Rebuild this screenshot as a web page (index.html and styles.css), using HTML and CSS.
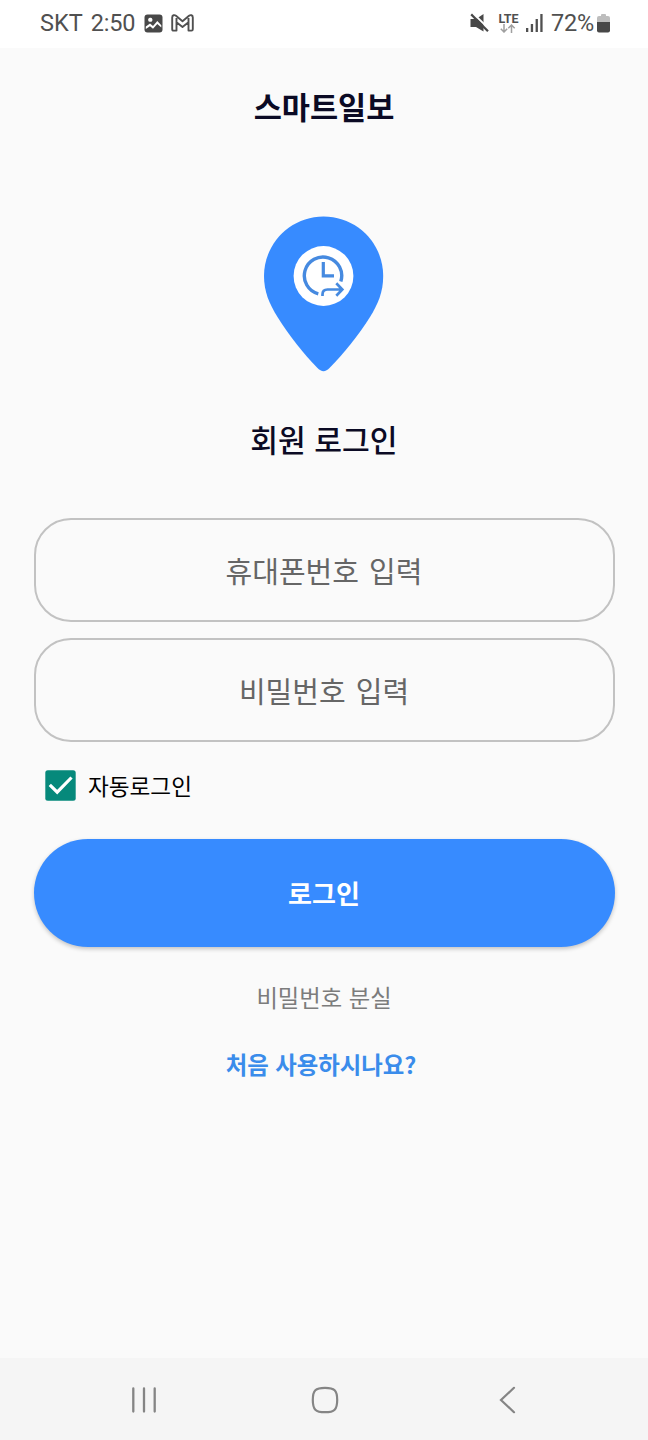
FILE: index.html
```html
<!DOCTYPE html>
<html lang="ko">
<head>
<meta charset="utf-8">
<title>스마트일보</title>
<link rel="stylesheet" href="styles.css">
</head>
<body>
<div class="phone">
  <header class="status">
    <div class="status-left">
      <span class="carrier">SKT</span>
      <span class="time">2:50</span>
      <svg class="photo-icon" width="19" height="19" viewBox="0 0 19 19"><rect x="0.500" y="0.500" width="18" height="18" rx="3" fill="#484848"/><path d="M1.800 12.500 6 9.500l3 2.500 4.300-5 4 4.200v2.300l-4-3.500L9 14.800l-3-2.500-4.200 2.700z" fill="#fff"/><rect x="4.300" y="3.800" width="4" height="4" rx="1.500" fill="#fff"/></svg>
      <svg class="mail-icon" width="23" height="18" viewBox="0 0 23 18"><path d="M1.200 15.300V3.500C1.200 1 3.500.600 5 1.800l6.500 5.400L18 1.800c1.500-1.200 3.800-.8 3.800 1.700v11.800q0 1.300-1.300 1.300h-3V8.200L11.500 13 5.500 8.200v8.400h-3q-1.300 0-1.300-1.300zM5.500 8.200V4M17.500 8.200V4" fill="none" stroke="#505050" stroke-width="1.900" stroke-linejoin="round"/></svg>
    </div>
    <div class="status-right">
      <svg class="mute-icon" width="20" height="20" viewBox="0 0 20 20"><path d="M.500 6H6L13.500 1v17.500L6 14H.500z" fill="#484848"/><path d="M3 .300 20 16.800" stroke="#fff" stroke-width="2"/><path d="M1.200 1.400 18 18.300" stroke="#484848" stroke-width="2.200"/></svg>
      <div class="network"><span class="lte">LTE</span><svg width="16" height="9" viewBox="0 0 16 9" fill="none" stroke="#a0a0a0" stroke-width="1.500"><path d="M4 0v8M.800 4.800 4 8l3.200-3.200M11.500 9V1M8.300 4.200 11.500 1l3.200 3.200"/></svg></div>
      <svg class="signal-icon" width="18" height="18" viewBox="0 0 18 18" fill="#505050"><path d="M0 14h2.300v4H0zM4.800 10h2.300v8H4.800zM9.600 5h2.300v13H9.600zM14.300 0h2.300v18h-2.300z"/></svg>
      <span class="percent">72%</span>
      <svg class="battery-icon" width="13" height="19" viewBox="0 0 13 19"><path d="M0 8V4q0-2 2-2h2V1q0-1 1-1h3q1 0 1 1v1h2q2 0 2 2v4z" fill="#bdbdbd"/><path d="M0 8h13v8.500q0 2-2 2H2q-2 0-2-2z" fill="#484848"/></svg>
    </div>
  </header>
  <main class="content">
    <h1 class="title">스마트일보</h1>
    <svg class="logo" width="120" height="156" viewBox="0 0 120 156">
      <path d="M59.500.500C27 .500 0 27 0 60c0 16 5.500 28 13.500 41C24 118 40 138.500 53 151.500c5 5 8 5 13 0 13-13 29.500-33.500 40-50.500 8-13 13.200-25 13.200-41C119.200 27 92.500.500 59.500.500z" fill="#378bff"/>
      <circle cx="59.500" cy="60" r="29.900" fill="#fff"/>
      <g fill="none" stroke="#468ae0">
        <path d="M54.300 77.800A18.700 18.700 0 1 1 76.800 65.500" stroke-width="3.400"/>
        <path d="M59.300 46v13.800H70" stroke-width="3.200"/>
        <path d="M58.500 80v-1.500q0-5 5-5H77.500M72.300 67.300l6 6.200-6 6.200" stroke-width="2.700"/>
      </g>
    </svg>
    <h2 class="subtitle">회원 로그인</h2>
    <form class="login-form">
      <input class="field" type="text" placeholder="휴대폰번호 입력">
      <input class="field" type="password" placeholder="비밀번호 입력">
      <label class="remember">
        <svg width="31" height="31" viewBox="0 0 31 31"><rect x=".300" y=".300" width="30.400" height="30.400" rx="2.500" fill="#06897b"/><path d="M4.800 14.800l7.400 7.400L26.500 7.500" fill="none" stroke="#fff" stroke-width="3.200"/></svg>
        <span>자동로그인</span>
      </label>
      <button class="submit" type="button">로그인</button>
    </form>
    <a class="forgot">비밀번호 분실</a>
    <a class="signup">처음 사용하시나요?</a>
  </main>
  <nav class="navbar">
    <svg width="26" height="28" viewBox="0 0 26 28" stroke="#858585" stroke-width="2.300" stroke-linecap="round"><path d="M2.300 2.500v23M13 2.500v23M23.700 2.500v23"/></svg>
    <svg class="home" width="28" height="28" viewBox="0 0 28 28" fill="none" stroke="#858585" stroke-width="2.200"><path d="M14 1.800c9.500 0 12.200 2.700 12.200 12.200S23.500 26.200 14 26.200 1.800 23.500 1.800 14 4.500 1.800 14 1.800z"/></svg>
    <svg width="18" height="28" viewBox="0 0 18 28" fill="none" stroke="#858585" stroke-width="2.200" stroke-linecap="round"><path d="M15 1.800 2 14l13 12.200"/></svg>
  </nav>
</div>
</body>
</html>
```
FILE: styles.css
```css
* { box-sizing: border-box; }
body { margin: 0; background: #fafafa; font-family: "Noto Sans CJK KR", sans-serif; }
.phone { width: 648px; height: 1440px; display: flex; flex-direction: column; }
.status { height: 48px; flex: none; display: flex; justify-content: space-between; align-items: center; padding: 0 38px 2px 40px; background: #fff; color: #505050; font: 23.5px/30px Roboto, sans-serif; }
.status-left, .status-right { display: flex; align-items: center; }
.time { margin-left: 8px; letter-spacing: -0.2px; }
.photo-icon { margin-left: 9px; }
.mail-icon { margin-left: 8px; }
.network { width: 21px; margin: 0 7px 0 8px; display: flex; flex-direction: column; align-items: center; }
.lte { font-size: 12.500px; line-height: 11px; font-weight: 700; }
.percent { margin: 0 3px 0 7px; letter-spacing: -0.2px; }
.content { flex: 1; display: flex; flex-direction: column; align-items: center; padding: 36px 33.5px 0; }
.title { margin: 0; font-size: 30.6px; line-height: 44px; font-weight: 700; color: #0b0a24; }
.logo { margin-top: 88px; }
.subtitle { margin: 45px 0 0; font-size: 30.2px; line-height: 44px; font-weight: 500; color: #0b0a24; }
.login-form { align-self: stretch; display: flex; flex-direction: column; margin-top: 57px; }
.field { height: 104px; margin: 0 0 16px; padding: 0; border: 2px solid #c2c2c2; border-radius: 37px; background: transparent; text-align: center; font: 400 29px/44px "Noto Sans CJK KR", sans-serif; word-spacing: 2px; }
.field::placeholder { color: #666; opacity: 1; }
.remember { display: flex; align-items: center; gap: 12px; height: 31px; margin: 12px 0 0 11.5px; font-size: 22.6px; line-height: 31px; color: #000; }
.submit { height: 108px; margin: 38px 0 0; padding: 0; border: 0; border-radius: 54px; background: #378bff; box-shadow: 0 2px 4px rgba(0,0,0,.22); color: #fff; font: 700 26px/40px "Noto Sans CJK KR", sans-serif; }
.forgot { margin-top: 32px; font-size: 23.3px; line-height: 36px; color: #7c7c7c; }
.signup { margin: 31px 6px 0 0; font-size: 23.4px; line-height: 36px; font-weight: 700; color: #3a8ceb; }
.navbar { flex: none; height: 82px; display: flex; justify-content: space-between; align-items: center; padding: 2px 131px 0; background: #f5f5f5; }
.home { margin-right: 6px; }
```
